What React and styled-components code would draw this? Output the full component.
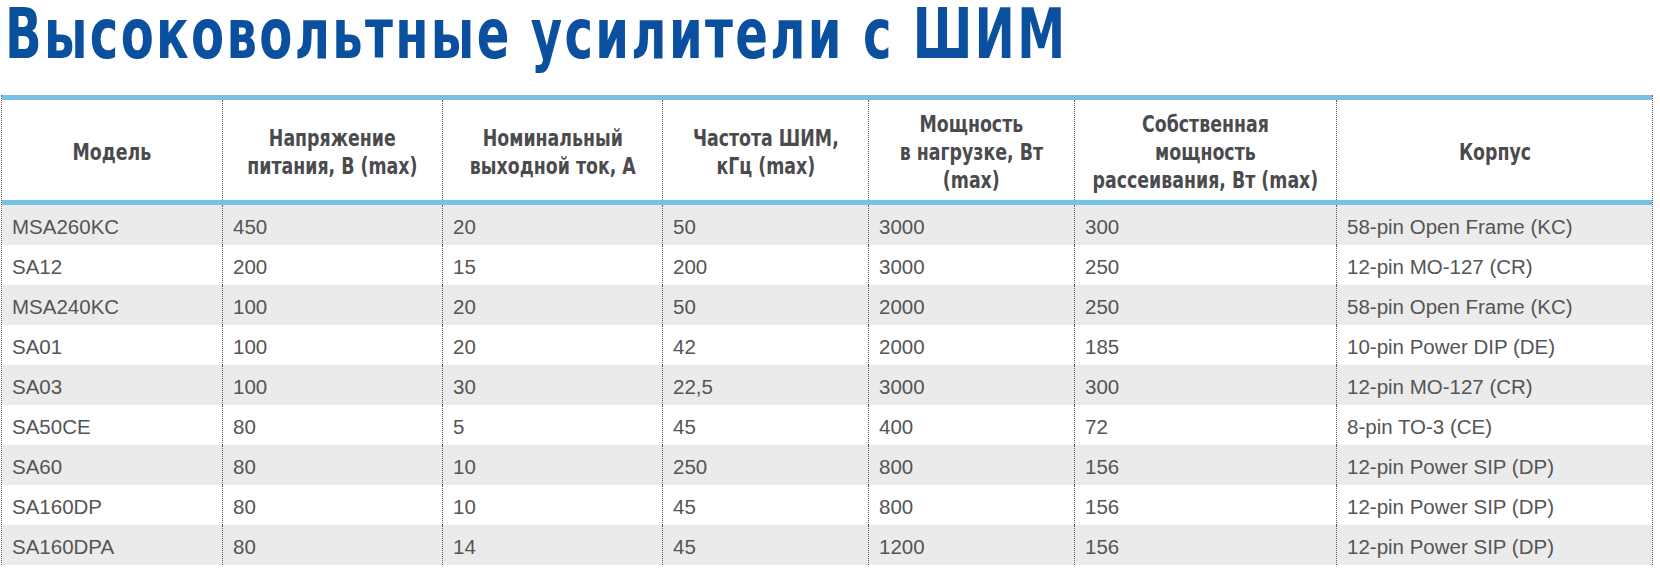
import React from "react";
import styled, { createGlobalStyle } from "styled-components";

const Global = createGlobalStyle`
  html, body { margin: 0; padding: 0; background: #ffffff; }
  body { width: 1660px; height: 570px; overflow: hidden; }
`;

const COLS = "220px 220px 220px 206px 206px 262px 316px";
const BLUE = "#76c1e5";
const DOTS = "#5a5a5a";
const CONDENSED = `"Liberation Sans Narrow", "DejaVu Sans Condensed", "Liberation Sans", sans-serif`;

const Page = styled.div`
  display: flex;
  flex-direction: column;
  width: 1660px;
`;

const Title = styled.h1`
  margin: 0;
  padding: 0 0 0 5px;
  height: 95px;
  box-sizing: border-box;
  font-family: ${CONDENSED};
  font-weight: 700;
  font-size: 70px;
  line-height: 68px;
  letter-spacing: 3px;
  color: #0b4f9f;
  white-space: nowrap;
`;

const TitleText = styled.span`
  display: inline-block;
  transform: scaleX(0.765);
  transform-origin: left center;
`;

const Table = styled.div`
  margin-left: 1px;
  width: 1652px;
  box-sizing: border-box;
  border-left: 1px dotted ${DOTS};
  border-right: 1px dotted ${DOTS};
`;

const Head = styled.div`
  display: grid;
  grid-template-columns: ${COLS};
  height: 110px;
  box-sizing: border-box;
  border-top: 5px solid ${BLUE};
  border-bottom: 5px solid ${BLUE};
`;

const HeadCell = styled.div`
  display: flex;
  align-items: center;
  justify-content: center;
  text-align: center;
  padding: 4px 0 0;
  overflow: visible;
  border-left: ${(p) => (p.$first ? "none" : `1px dotted ${DOTS}`)};
  font-family: ${CONDENSED};
  font-weight: 700;
  font-size: 23px;
  line-height: 28px;
  color: #4b4b4e;
  white-space: nowrap;
`;

const HeadText = styled.span`
  display: inline-block;
  transform: scaleX(0.84);
  transform-origin: center center;
`;

const Row = styled.div`
  display: grid;
  grid-template-columns: ${COLS};
  height: 40px;
  background: ${(p) => (p.$alt ? "#ebebeb" : "#ffffff")};
`;

const Cell = styled.div`
  box-sizing: border-box;
  padding: 3px 0 0 10px;
  border-left: ${(p) => (p.$first ? "none" : `1px dotted ${DOTS}`)};
  font-family: "Liberation Sans", Arial, sans-serif;
  font-size: 20.5px;
  line-height: 37px;
  color: #555555;
  white-space: nowrap;
`;

const headers = [
  ["Модель"],
  ["Напряжение", "питания, В (max)"],
  ["Номинальный", "выходной ток, А"],
  ["Частота ШИМ,", "кГц (max)"],
  ["Мощность", "в нагрузке, Вт", "(max)"],
  ["Собственная", "мощность", "рассеивания, Вт (max)"],
  ["Корпус"],
];

const rows = [
  ["MSA260KC", "450", "20", "50", "3000", "300", "58-pin Open Frame (KC)"],
  ["SA12", "200", "15", "200", "3000", "250", "12-pin MO-127 (CR)"],
  ["MSA240KC", "100", "20", "50", "2000", "250", "58-pin Open Frame (KC)"],
  ["SA01", "100", "20", "42", "2000", "185", "10-pin Power DIP (DE)"],
  ["SA03", "100", "30", "22,5", "3000", "300", "12-pin MO-127 (CR)"],
  ["SA50CE", "80", "5", "45", "400", "72", "8-pin TO-3 (CE)"],
  ["SA60", "80", "10", "250", "800", "156", "12-pin Power SIP (DP)"],
  ["SA160DP", "80", "10", "45", "800", "156", "12-pin Power SIP (DP)"],
  ["SA160DPA", "80", "14", "45", "1200", "156", "12-pin Power SIP (DP)"],
];

export default function App() {
  return (
    <Page>
      <Global />
      <Title>
        <TitleText>Высоковольтные усилители с ШИМ</TitleText>
      </Title>
      <Table>
        <Head>
          {headers.map((lines, i) => (
            <HeadCell key={i} $first={i === 0}>
              <HeadText>
                {lines.map((l, j) => (
                  <React.Fragment key={j}>
                    {j > 0 && <br />}
                    {l}
                  </React.Fragment>
                ))}
              </HeadText>
            </HeadCell>
          ))}
        </Head>
        {rows.map((r, i) => (
          <Row key={i} $alt={i % 2 === 0}>
            {r.map((c, j) => (
              <Cell key={j} $first={j === 0}>
                {c}
              </Cell>
            ))}
          </Row>
        ))}
      </Table>
    </Page>
  );
}
